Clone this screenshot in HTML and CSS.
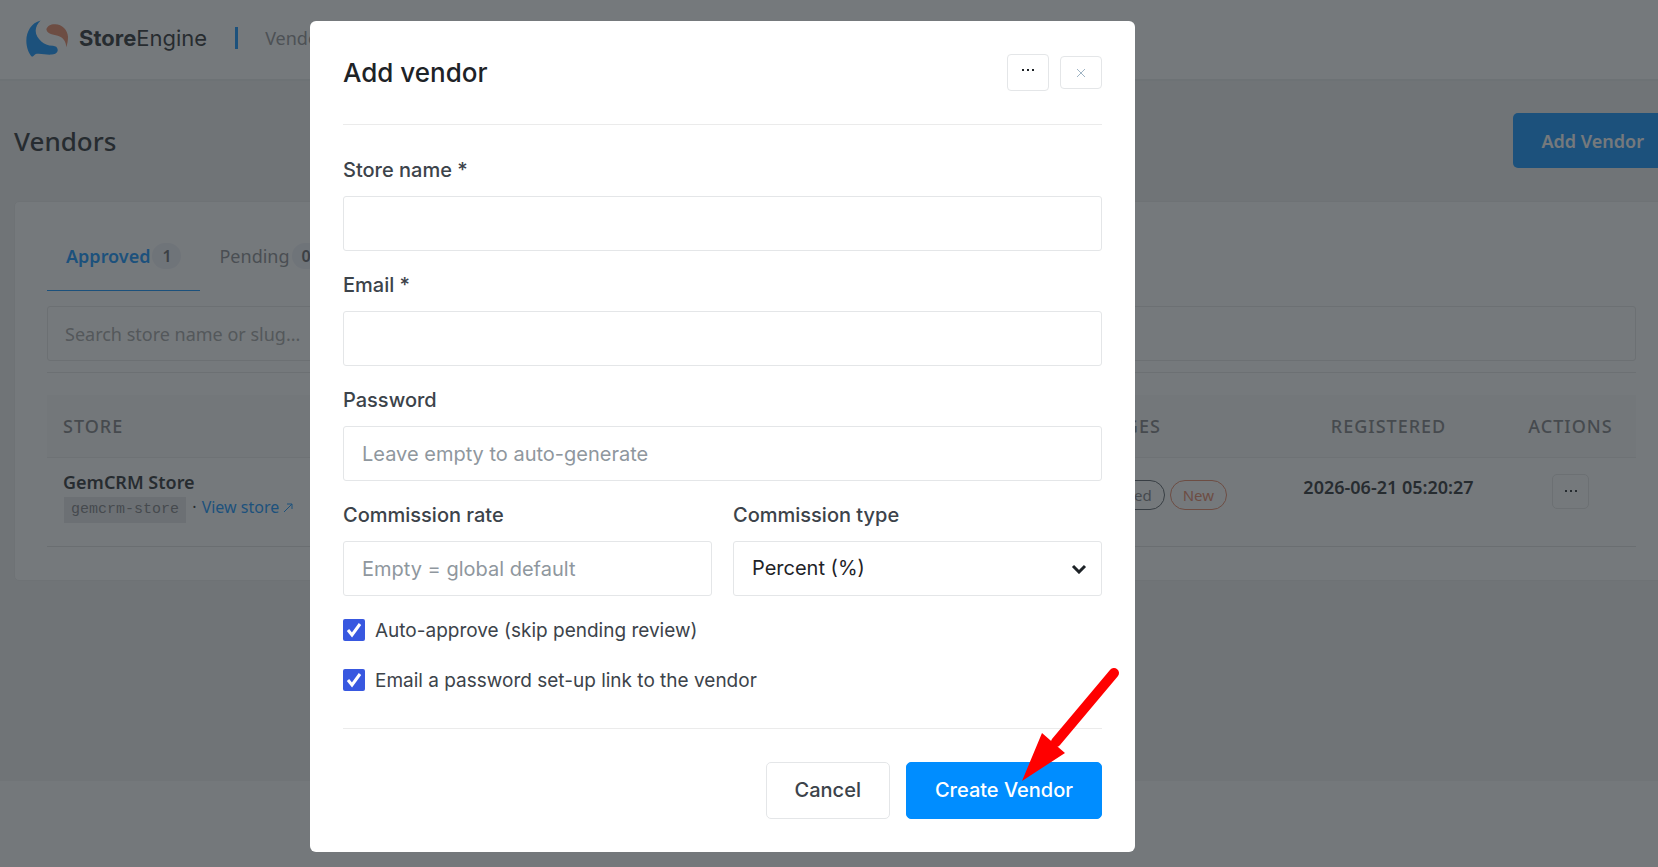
FILE: index.html
```html
<!DOCTYPE html>
<html lang="en">
<head>
<meta charset="utf-8">
<meta name="viewport" content="width=device-width, initial-scale=1">
<title>Vendors – StoreEngine</title>
<link rel="stylesheet" href="styles.css">
</head>
<body>
<div class="page">
  <header class="topbar">
    <svg class="logo" viewBox="0 0 126 110" aria-hidden="true">
      <path fill="#008dff" d="M44 1C16 8 1 34 1 62c0 20 7 38 17 48 5-1 8-8 14-9 14-2 30 4 46 2 12-1 18-7 17-15-1-7-6-10-14-11-16-1-26-5-35-13-10-9-17-19-17-32 0-12 6-23 15-31z"/>
      <path fill="#e8805c" d="M61 27c3-10 14-16 27-15 20 1 37 16 38 38 0 12-2 22-5 31-1-14-7-26-20-32-14-7-37-4-40-22z"/>
    </svg>
    <span class="brand"><b>Store</b>Engine</span>
    <span class="crumb">Vendors</span>
  </header>
  <main class="content">
    <div class="page-head">
      <h1 class="page-title">Vendors</h1>
      <button class="add-btn" type="button">Add Vendor</button>
    </div>
    <section class="card">
      <nav class="tabs">
        <a class="tab tab-active" href="#approved">Approved<span class="count">1</span></a>
        <a class="tab" href="#pending">Pending<span class="count">0</span></a>
      </nav>
      <input class="search" type="search" aria-label="Search vendors" placeholder="Search store name or slug...">
      <div class="rule"></div>
      <table class="vendors">
        <thead>
          <tr><th class="col-store">Store</th><th class="col-badges">Badges</th><th class="col-date">Registered</th><th class="col-actions">Actions</th></tr>
        </thead>
        <tbody>
          <tr>
            <td class="store">
              <div class="store-name">GemCRM Store</div>
              <div class="store-meta"><code class="slug">gemcrm-store</code> · <a class="view" href="#store">View store <svg class="out" viewBox="0 0 10 10" aria-hidden="true"><path d="M1 9 9 1M4 1h5v5"/></svg></a></div>
            </td>
            <td><div class="pills"><span class="pill">Trusted</span><span class="pill pill-new">New</span></div></td>
            <td class="date">2026-06-21 05:20:27</td>
            <td class="actions"><button class="more" type="button" aria-label="Row actions"><svg class="dots" viewBox="0 0 12 2" aria-hidden="true"><path d="M0 0h2v2H0zM5 0h2v2H5zM10 0h2v2h-2z"/></svg></button></td>
          </tr>
        </tbody>
      </table>
    </section>
  </main>
</div>

<div class="overlay">
  <form class="modal" role="dialog" aria-labelledby="modal-title">
    <header class="modal-head">
      <h2 class="modal-title" id="modal-title">Add vendor</h2>
      <button class="icon-btn icon-more" type="button" aria-label="More"><svg class="dots" viewBox="0 0 12 2" aria-hidden="true"><path d="M0 0h2v2H0zM5 0h2v2H5zM10 0h2v2h-2z"/></svg></button>
      <button class="icon-btn" type="button" aria-label="Close"><svg class="close" viewBox="0 0 10 10" aria-hidden="true"><path d="m1 1 8 8M9 1 1 9"/></svg></button>
    </header>
    <div class="fields">
      <div class="field"><label class="label" for="name">Store name *</label><input class="control" id="name" type="text"></div>
      <div class="field"><label class="label" for="email">Email *</label><input class="control" id="email" type="email"></div>
      <div class="field"><label class="label" for="pass">Password</label><input class="control" id="pass" type="text" placeholder="Leave empty to auto-generate"></div>
      <div class="pair">
        <div class="field"><label class="label" for="rate">Commission rate</label><input class="control" id="rate" type="text" placeholder="Empty = global default"></div>
        <div class="field"><label class="label" for="type">Commission type</label>
          <div class="select-wrap">
            <select class="control select" id="type"><option>Percent (%)</option></select>
            <svg class="chevron" viewBox="0 0 16 10" aria-hidden="true"><path d="m2 2 6 6 6-6"/></svg>
          </div>
        </div>
      </div>
    </div>
    <div class="checks">
      <div class="check"><span class="box-wrap"><input class="box" id="auto" type="checkbox" checked><svg class="tick" viewBox="0 0 22 22" aria-hidden="true"><path d="m5 11 4 5 8-11"/></svg></span><label for="auto">Auto-approve (skip pending review)</label></div>
      <div class="check"><span class="box-wrap"><input class="box" id="link" type="checkbox" checked><svg class="tick" viewBox="0 0 22 22" aria-hidden="true"><path d="m5 11 4 5 8-11"/></svg></span><label for="link">Email a password set-up link to the vendor</label></div>
    </div>
    <footer class="modal-foot">
      <button class="btn" type="button">Cancel</button>
      <button class="btn btn-primary" type="submit">Create Vendor</button>
    </footer>
    <svg class="arrow" viewBox="0 0 98 115" aria-hidden="true">
      <path d="M92 6 34 75" fill="none" stroke="#f00" stroke-width="10" stroke-linecap="round"/>
      <path d="M0 114 20 66l8 7 8 7 7 6z" fill="#f00"/>
    </svg>
  </form>
</div>
</body>
</html>
```

FILE: styles.css
```css
* { box-sizing: border-box; }
body {
  margin: 0;
  min-height: 100vh;
  background: #fbfbfb;
  color: #1e2327;
  font: 18px/26px "Noto Sans", "Open Sans", sans-serif;
  overflow: hidden;
}
button, input, select { font: inherit; color: inherit; }
a { color: #008dff; text-decoration: none; }

/* Page */
.page { min-height: 781px; background: #f0f0f1; overflow: hidden; }
.topbar {
  display: flex;
  align-items: center;
  height: 81px;
  padding: 0 26px 3px;
  background: #fff;
  border-bottom: 2px solid #e9eaec;
}
.logo { width: 42px; height: 37px; margin-right: 11px; }
.brand { font: 22px/32px Inter, sans-serif; }
.crumb {
  margin-left: 28px;
  padding-left: 27px;
  border-left: 3px solid #008dff;
  line-height: 22px;
  color: #8c8c90;
}
.content { width: 100%; margin-left: 14px; }
.page-head {
  display: flex;
  align-items: center;
  justify-content: space-between;
  padding: 32px 0 33px;
}
.page-title { margin: 0; font-size: 26px; line-height: 36px; font-weight: 500; }
.add-btn {
  height: 55px;
  padding: 0 28px;
  border: 0;
  border-radius: 5px;
  background: #008dff;
  color: #fff;
  font-weight: 600;
}
.card {
  padding: 32px 35px 33px 32px;
  border: 1px solid #ebebeb;
  border-radius: 5px;
  background: #fff;
}
.tabs { display: flex; }
.tab {
  display: flex;
  align-items: center;
  height: 57px;
  padding: 0 19px 12px;
  border-bottom: 1px solid transparent;
  color: #85858a;
}
.tab-active { border-color: #008dff; color: #008dff; font-weight: 600; }
.count {
  width: 29px;
  margin-left: 2px;
  border-radius: 13px;
  background: #eeeff6;
  color: #5c5c60;
  font-size: 16px;
  font-weight: 600;
  text-align: center;
}
.search {
  display: block;
  width: 100%;
  height: 55px;
  margin: 15px 0 11px;
  padding: 0 17px;
  border: 1px solid #e4e4e4;
  border-radius: 3px;
  background: #fff;
}
.search::placeholder { color: #a0a0a0; opacity: 1; }
.rule { border-top: 1px solid #e4e4e4; margin-bottom: 22px; }
.vendors { width: 100%; table-layout: fixed; border-collapse: collapse; }
.vendors th {
  height: 62px;
  padding: 0 16px;
  border-bottom: 1px solid #ebebeb;
  background: #f8f8f9;
  color: #78787c;
  font-size: 18px;
  font-weight: 500;
  letter-spacing: 1px;
  text-transform: uppercase;
}
.vendors .col-store { text-align: left; }
.col-badges { width: 298px; }
.col-date { width: 233px; }
.vendors .col-actions { width: 131px; padding: 0; }
.vendors td {
  height: 89px;
  padding: 16px;
  border-bottom: 1px solid #dfdfe0;
  vertical-align: top;
}
.vendors .store { padding-top: 13px; }
.store-name { font-weight: 600; line-height: 23px; }
.store-meta { font-size: 16px; color: #1e2327; }
.slug {
  display: inline-block;
  margin: 0 2px 0 1px;
  padding: 0 7px;
  background: #e6e6e8;
  color: #78787c;
  font: 15px/26px "Liberation Mono", monospace;
}
.view { margin-left: 1px; }
.out { width: 10px; height: 10px; fill: none; stroke: #008dff; }
.pills { display: flex; justify-content: flex-end; gap: 5px; padding: 6px 29px 0 0; }
.pill {
  padding: 0 12px;
  border: 1px solid #50575e;
  border-radius: 15px;
  color: #78787c;
  font-size: 15px;
  line-height: 28px;
}
.pill-new { border-color: #e8805c; color: #e8805c; }
.vendors .date { padding: 14px 0; font-weight: 600; line-height: 30px; text-align: center; }
.actions { text-align: center; }
.more {
  width: 37px;
  height: 35px;
  padding: 0;
  border: 1px solid #e4e4e4;
  border-radius: 5px;
  background: #fff;
}
.dots { display: block; width: 12px; height: 2px; margin: auto; fill: #1e2327; }

/* Dialog */
.overlay {
  position: absolute;
  inset: 0;
  padding: 21px 15px 15px 310px;
  background: rgba(43, 49, 54, .65);
  overflow: auto;
}
.modal {
  position: relative;
  max-width: 825px;
  padding: 33px;
  border-radius: 6px;
  background: #fff;
  color: #3c434a;
  font: 20px/29px Inter, sans-serif;
}
.modal-head {
  display: flex;
  align-items: center;
  gap: 11px;
  padding-bottom: 33px;
  border-bottom: 1px solid #ebebeb;
}
.modal-title { flex: 1; margin: 0; color: #1e2327; font-size: 26px; line-height: 37px; font-weight: 500; }
.icon-btn {
  width: 42px;
  height: 33px;
  padding: 0;
  border: 1px solid #e4e6e8;
  border-radius: 4px;
  background: #fff;
}
.icon-more { height: 37px; padding-bottom: 5px; }
.close { display: block; width: 10px; height: 10px; margin: auto; fill: none; stroke: #9fb4c4; }
.fields { display: grid; gap: 20px; padding-top: 31px; }
.pair { display: grid; grid-template-columns: 1fr 1fr; gap: 21px; }
.field { display: grid; gap: 11px; }
.label { font-weight: 500; }
.control {
  width: 100%;
  height: 55px;
  padding: 0 18px;
  border: 1px solid #e4e6e8;
  border-radius: 3px;
  background: #fff;
  color: #1e2327;
}
.control::placeholder { color: #8f979e; opacity: 1; }
.select-wrap { position: relative; }
.select { display: block; appearance: none; }
.chevron {
  position: absolute;
  right: 15px;
  top: 23px;
  width: 16px;
  height: 10px;
  fill: none;
  stroke: #1e2327;
  stroke-width: 3;
  pointer-events: none;
}
.checks { display: grid; gap: 28px; padding: 23px 0 37px; font-size: 19px; line-height: 24px; }
.check { display: flex; gap: 10px; height: 22px; }
.box-wrap { position: relative; width: 22px; height: 22px; }
.box { appearance: none; display: block; width: 22px; height: 22px; margin: 0; border-radius: 2px; background: #3858e0; }
.tick { position: absolute; inset: 0; fill: none; stroke: #fff; stroke-width: 3; pointer-events: none; }
.modal-foot {
  display: flex;
  justify-content: flex-end;
  gap: 16px;
  padding-top: 33px;
  border-top: 1px solid #ebebeb;
}
.btn {
  height: 57px;
  padding: 0 28px;
  border: 1px solid #e4e6e8;
  border-radius: 5px;
  background: #fff;
  font-weight: 500;
}
.btn-primary { border-color: #008dff; background: #008dff; color: #fff; }
.arrow { position: absolute; right: 15px; bottom: 70px; width: 98px; height: 115px; pointer-events: none; }
```
